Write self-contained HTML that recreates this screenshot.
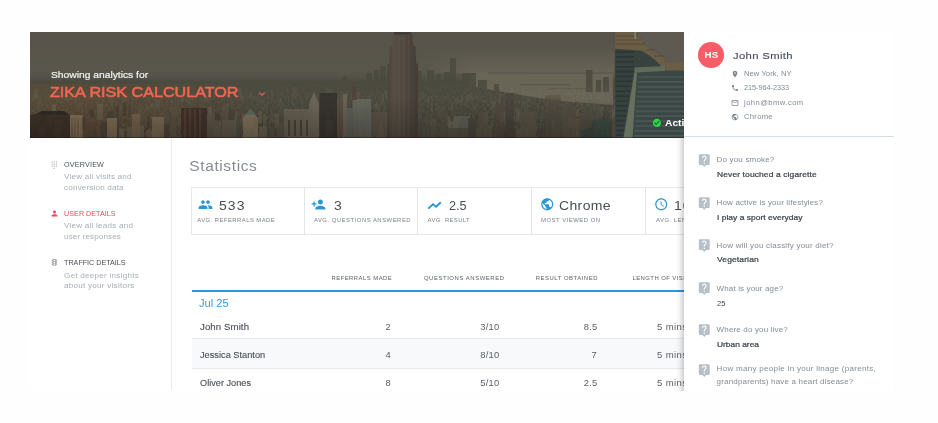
<!DOCTYPE html>
<html lang="en">
<head>
<meta charset="utf-8">
<title>Zika Risk Calculator – Analytics</title>
<style>
html,body{margin:0;padding:0;}
body{width:938px;height:423px;position:relative;overflow:hidden;background:#fefefe;font-family:"Liberation Sans",sans-serif;}
.t{position:absolute;white-space:nowrap;line-height:20px;height:20px;}
#main{will-change:transform;position:absolute;left:0;top:0;width:938px;height:390px;overflow:hidden;}
#hero{position:absolute;left:30px;top:32px;width:654px;height:106px;overflow:hidden;background:#6a6358;}
#hero svg{position:absolute;left:0;top:0;}
.vline{position:absolute;left:171.200px;top:138px;width:1px;height:252px;background:#e9ecee;}
.ic{position:absolute;}
#stats{position:absolute;left:190.500px;top:186.500px;width:600px;height:46.500px;border:1px solid #e3e8ec;box-sizing:content-box;}
#stats i{position:absolute;top:0;width:1px;height:47px;background:#e2e7eb;}
.blue{position:absolute;left:191.500px;top:290px;width:500px;height:1.500px;background:#2d95d9;}
.stripe{position:absolute;left:191.5px;top:338px;width:500px;height:29px;background:#f7f9fa;border-top:1px solid #e6eaed;border-bottom:1px solid #e6eaed;}
#panel{position:absolute;left:684px;top:31px;width:210px;height:360px;background:#fff;box-shadow:0 0 2px rgba(0,0,0,.03);}
#pshadow{position:absolute;left:676px;top:138px;width:8px;height:253px;background:linear-gradient(to right,rgba(0,0,0,0),rgba(0,0,0,.04) 40%,rgba(0,0,0,.18));}
#panelclip{will-change:transform;position:absolute;left:0;top:0;width:938px;height:391px;overflow:hidden;}
#ptext{position:absolute;left:0;top:0;width:938px;height:391px;overflow:hidden;}
.avatar{position:absolute;left:698.300px;top:42.200px;width:25.600px;height:25.600px;border-radius:50%;background:#f85c67;}
.pdiv{position:absolute;left:684px;top:135.6px;width:210px;height:1.2px;background:#d6dee4;}
</style>
</head>
<body>
<div id="main">
  <div style="position:absolute;left:30px;top:32px;width:700px;height:358px;background:#fff"></div>
  <div id="hero">
    <svg width="654" height="106" viewBox="30 32 654 106" preserveAspectRatio="none">
<defs>
<linearGradient id="sky" x1="0" y1="0" x2="0" y2="1">
<stop offset="0" stop-color="#57534a"/>
<stop offset=".36" stop-color="#59564c"/>
<stop offset=".41" stop-color="#56544a"/>
<stop offset=".47" stop-color="#4b4a3e"/>
<stop offset=".75" stop-color="#48463b"/>
<stop offset="1" stop-color="#423f36"/>
</linearGradient>
<linearGradient id="esb" x1="0" y1="0" x2="1" y2="0">
<stop offset="0" stop-color="#4a433b"/><stop offset=".2" stop-color="#564e44"/><stop offset=".55" stop-color="#514940"/><stop offset="1" stop-color="#443d36"/>
</linearGradient>
<linearGradient id="rb" x1="0" y1="0" x2="0" y2="1">
<stop offset="0" stop-color="#4a5350"/><stop offset="1" stop-color="#2f3a38"/>
</linearGradient>
<filter id="nz" x="0" y="0" width="100%" height="100%">
<feTurbulence type="fractalNoise" baseFrequency=".55 .3" numOctaves="2" seed="7" result="n"/>
<feColorMatrix type="matrix" values="0 0 0 0 .17  0 0 0 0 .17  0 0 0 0 .13  1.0 0 0 0 -.38"/>
</filter>
<filter id="nz2" x="0" y="0" width="100%" height="100%">
<feTurbulence type="fractalNoise" baseFrequency=".5 .25" numOctaves="2" seed="23" result="n"/>
<feColorMatrix type="matrix" values="0 0 0 0 .5  0 0 0 0 .49  0 0 0 0 .41  0 .8 0 0 -.34"/>
</filter>
<linearGradient id="fade" x1="0" y1="0" x2="0" y2="1">
<stop offset="0" stop-color="#fff" stop-opacity="0"/><stop offset=".45" stop-color="#fff" stop-opacity="0"/><stop offset=".62" stop-color="#fff" stop-opacity=".5"/><stop offset="1" stop-color="#fff" stop-opacity="1"/>
</linearGradient>
<mask id="cm"><rect x="30" y="32" width="654" height="106" fill="url(#fade)"/></mask>
</defs>
<rect x="30" y="32" width="654" height="106" fill="url(#sky)"/>
<!-- water band right -->
<path d="M470 73 L613 71.500 L613 105 L560 101 L520 95 L470 86z" fill="#6b6759" opacity=".9"/>
<path d="M520 84h50v1.200h-50zM548 88h40v1.200h-40z" fill="#59564b" opacity=".7"/>
<linearGradient id="hz" x1="0" y1="0" x2="0" y2="1"><stop offset="0" stop-color="#6b6759" stop-opacity="0"/><stop offset="1" stop-color="#6b6759" stop-opacity=".8"/></linearGradient>
<linearGradient id="hzx" x1="0" y1="0" x2="1" y2="0"><stop offset="0" stop-color="#fff" stop-opacity="0"/><stop offset=".3" stop-color="#fff" stop-opacity="1"/><stop offset="1" stop-color="#fff" stop-opacity="1"/></linearGradient>
<mask id="hzm"><rect x="416" y="46" width="198" height="28" fill="url(#hzx)"/></mask>
<rect x="416" y="46" width="198" height="27.500" fill="url(#hz)" mask="url(#hzm)"/>
<path d="M488 72.200h125v1.500H488z" fill="#55534a" opacity=".7"/>
<!-- distant skyline -->
<g fill="#4b4a3f" opacity=".85">
<rect x="366" y="73" width="6" height="14"/><rect x="374" y="70" width="5" height="16"/><rect x="380" y="66" width="6" height="22"/>
<rect x="416" y="71" width="6" height="16"/><rect x="427" y="70" width="7" height="18"/><rect x="437" y="74" width="4" height="12"/>
<rect x="444" y="72" width="7" height="16"/><rect x="450" y="58" width="6" height="30"/><rect x="462" y="73" width="8" height="18"/>
<rect x="465" y="73" width="11" height="24"/><rect x="478" y="80" width="9" height="18"/><rect x="494" y="84" width="5" height="14"/>
<rect x="586" y="70" width="6.500" height="22"/><rect x="596" y="80" width="5" height="12"/><rect x="603" y="77" width="6" height="15"/>
<rect x="305" y="82" width="8" height="16"/><rect x="342" y="76" width="5" height="14"/>
</g>
<!-- city texture -->
<g mask="url(#cm)">
<rect x="30" y="32" width="654" height="106" filter="url(#nz)"/>
<rect x="30" y="32" width="654" height="106" filter="url(#nz2)" opacity=".55"/>
</g>
<radialGradient id="warm" cx="60" cy="140" r="230" gradientUnits="userSpaceOnUse" gradientTransform="translate(0 84) scale(1 .4)"><stop offset="0" stop-color="#7a4e28" stop-opacity=".42"/><stop offset=".6" stop-color="#7a4e28" stop-opacity=".2"/><stop offset="1" stop-color="#7a4e28" stop-opacity="0"/></radialGradient>
<rect x="30" y="84" width="330" height="54" fill="url(#warm)"/>
<!-- proc -->
<g opacity=".38">
<rect x="30" y="99.8" width="3" height="9.9" fill="#4f4c41"/>
<rect x="34" y="89.2" width="4" height="9.8" fill="#646052"/>
<rect x="39" y="91.1" width="5" height="7.9" fill="#4f4c41"/>
<rect x="45" y="105.2" width="2" height="3.7" fill="#565649"/>
<rect x="50" y="94.6" width="2" height="7.8" fill="#4f4c41"/>
<rect x="55" y="90.6" width="5" height="7.9" fill="#625d4e"/>
<rect x="62" y="95.6" width="2" height="3.5" fill="#5d594a"/>
<rect x="66" y="92.0" width="2" height="9.2" fill="#646052"/>
<rect x="68" y="95.8" width="4" height="4.9" fill="#625d4e"/>
<rect x="75" y="93.8" width="2" height="6.7" fill="#646052"/>
<rect x="77" y="103.1" width="5" height="5.0" fill="#646052"/>
<rect x="83" y="104.7" width="2" height="3.6" fill="#4f4c41"/>
<rect x="85" y="105.2" width="3" height="6.1" fill="#565649"/>
<rect x="88" y="105.9" width="2" height="4.7" fill="#4f4c41"/>
<rect x="91" y="91.0" width="5" height="6.2" fill="#565649"/>
<rect x="96" y="92.2" width="5" height="5.2" fill="#4a483e"/>
<rect x="101" y="88.8" width="3" height="9.1" fill="#5d594a"/>
<rect x="107" y="100.4" width="2" height="3.1" fill="#4f4c41"/>
<rect x="109" y="95.7" width="5" height="7.5" fill="#5d594a"/>
<rect x="117" y="95.8" width="2" height="6.4" fill="#4f4c41"/>
<rect x="120" y="106.8" width="2" height="3.0" fill="#646052"/>
<rect x="123" y="97.6" width="2" height="4.7" fill="#646052"/>
<rect x="128" y="108.0" width="4" height="3.8" fill="#5d594a"/>
<rect x="133" y="102.7" width="3" height="3.1" fill="#4a483e"/>
<rect x="137" y="95.7" width="2" height="3.6" fill="#565649"/>
<rect x="139" y="94.1" width="2" height="7.8" fill="#4f4c41"/>
<rect x="141" y="98.3" width="4" height="6.9" fill="#4f4c41"/>
<rect x="145" y="106.3" width="5" height="4.2" fill="#646052"/>
<rect x="150" y="103.3" width="5" height="4.5" fill="#646052"/>
<rect x="155" y="99.5" width="5" height="10.6" fill="#646052"/>
<rect x="160" y="94.4" width="3" height="3.4" fill="#646052"/>
<rect x="164" y="93.3" width="2" height="8.9" fill="#4f4c41"/>
<rect x="168" y="93.5" width="3" height="5.3" fill="#565649"/>
<rect x="171" y="100.1" width="2" height="4.8" fill="#646052"/>
<rect x="175" y="105.4" width="2" height="5.2" fill="#5d594a"/>
<rect x="180" y="99.0" width="2" height="3.6" fill="#5d594a"/>
<rect x="182" y="97.5" width="2" height="4.4" fill="#646052"/>
<rect x="184" y="104.4" width="2" height="5.9" fill="#4a483e"/>
<rect x="189" y="96.8" width="5" height="8.5" fill="#5d594a"/>
<rect x="196" y="93.2" width="2" height="10.4" fill="#4a483e"/>
<rect x="201" y="85.6" width="3" height="10.7" fill="#565649"/>
<rect x="204" y="97.4" width="3" height="3.5" fill="#5d594a"/>
<rect x="207" y="95.3" width="2" height="6.6" fill="#625d4e"/>
<rect x="212" y="100.1" width="5" height="8.6" fill="#4a483e"/>
<rect x="218" y="101.9" width="2" height="8.5" fill="#4f4c41"/>
<rect x="220" y="98.4" width="3" height="7.6" fill="#4f4c41"/>
<rect x="224" y="94.1" width="4" height="3.1" fill="#625d4e"/>
<rect x="231" y="99.1" width="2" height="10.9" fill="#565649"/>
<rect x="234" y="96.6" width="3" height="10.5" fill="#4f4c41"/>
<rect x="238" y="87.6" width="3" height="9.7" fill="#646052"/>
<rect x="241" y="95.9" width="3" height="7.8" fill="#5d594a"/>
<rect x="247" y="98.9" width="2" height="7.0" fill="#4f4c41"/>
<rect x="250" y="92.3" width="2" height="5.9" fill="#646052"/>
<rect x="252" y="106.1" width="4" height="4.4" fill="#565649"/>
<rect x="257" y="91.1" width="3" height="10.1" fill="#565649"/>
<rect x="261" y="100.8" width="2" height="8.1" fill="#5d594a"/>
<rect x="263" y="106.0" width="3" height="4.8" fill="#5d594a"/>
<rect x="266" y="102.4" width="2" height="7.0" fill="#625d4e"/>
<rect x="271" y="89.8" width="2" height="10.6" fill="#5d594a"/>
<rect x="273" y="104.0" width="3" height="6.8" fill="#4f4c41"/>
<rect x="277" y="99.6" width="5" height="7.2" fill="#565649"/>
<rect x="284" y="103.7" width="3" height="5.6" fill="#4a483e"/>
<rect x="289" y="92.1" width="2" height="8.4" fill="#4a483e"/>
<rect x="292" y="87.0" width="5" height="9.3" fill="#5d594a"/>
<rect x="298" y="103.8" width="3" height="4.5" fill="#4a483e"/>
<rect x="301" y="102.4" width="2" height="9.4" fill="#625d4e"/>
<rect x="304" y="98.4" width="2" height="8.0" fill="#4a483e"/>
<rect x="306" y="104.6" width="5" height="4.6" fill="#4a483e"/>
<rect x="311" y="100.5" width="5" height="3.1" fill="#565649"/>
<rect x="316" y="103.6" width="2" height="4.8" fill="#646052"/>
<rect x="321" y="104.9" width="4" height="7.0" fill="#5d594a"/>
<rect x="326" y="87.1" width="5" height="10.2" fill="#565649"/>
<rect x="332" y="92.5" width="2" height="6.6" fill="#625d4e"/>
<rect x="335" y="102.5" width="4" height="7.6" fill="#4a483e"/>
<rect x="340" y="91.1" width="3" height="8.2" fill="#565649"/>
<rect x="346" y="95.9" width="5" height="4.0" fill="#4f4c41"/>
<rect x="351" y="101.4" width="3" height="7.3" fill="#4a483e"/>
<rect x="355" y="91.7" width="5" height="9.8" fill="#625d4e"/>
<rect x="360" y="97.0" width="3" height="5.7" fill="#4a483e"/>
<rect x="364" y="105.1" width="2" height="4.7" fill="#4f4c41"/>
<rect x="366" y="99.7" width="2" height="7.3" fill="#5d594a"/>
<rect x="369" y="99.4" width="2" height="11.0" fill="#646052"/>
<rect x="374" y="103.6" width="5" height="6.5" fill="#646052"/>
<rect x="382" y="94.0" width="2" height="9.1" fill="#646052"/>
<rect x="385" y="91.1" width="5" height="7.5" fill="#646052"/>
<rect x="418" y="98.4" width="3" height="5.2" fill="#5d594a"/>
<rect x="422" y="100.8" width="3" height="10.2" fill="#4f4c41"/>
<rect x="427" y="98.8" width="3" height="3.9" fill="#625d4e"/>
<rect x="431" y="103.0" width="2" height="8.6" fill="#625d4e"/>
<rect x="433" y="102.2" width="2" height="4.8" fill="#4a483e"/>
<rect x="438" y="99.0" width="3" height="5.0" fill="#4f4c41"/>
<rect x="444" y="100.2" width="4" height="4.0" fill="#4a483e"/>
<rect x="451" y="101.4" width="2" height="8.6" fill="#625d4e"/>
<rect x="454" y="98.2" width="5" height="6.3" fill="#5d594a"/>
<rect x="461" y="94.6" width="2" height="9.9" fill="#5d594a"/>
<rect x="465" y="96.0" width="2" height="9.8" fill="#5d594a"/>
<rect x="467" y="93.5" width="5" height="8.0" fill="#5d594a"/>
<rect x="473" y="105.2" width="4" height="5.5" fill="#5d594a"/>
<rect x="477" y="95.8" width="2" height="4.1" fill="#565649"/>
<rect x="479" y="96.9" width="3" height="6.1" fill="#4f4c41"/>
<rect x="484" y="98.4" width="5" height="4.0" fill="#565649"/>
<rect x="489" y="102.3" width="2" height="4.6" fill="#4a483e"/>
<rect x="491" y="101.1" width="5" height="7.0" fill="#646052"/>
<rect x="499" y="94.3" width="2" height="9.4" fill="#625d4e"/>
<rect x="501" y="102.6" width="4" height="7.9" fill="#4f4c41"/>
<rect x="505" y="94.8" width="2" height="4.5" fill="#5d594a"/>
<rect x="508" y="93.2" width="5" height="3.8" fill="#565649"/>
<rect x="514" y="92.1" width="2" height="9.1" fill="#4f4c41"/>
<rect x="517" y="93.5" width="4" height="5.8" fill="#4a483e"/>
<rect x="521" y="100.9" width="5" height="8.6" fill="#5d594a"/>
<rect x="527" y="96.0" width="3" height="5.9" fill="#5d594a"/>
<rect x="532" y="104.9" width="2" height="3.8" fill="#4a483e"/>
<rect x="534" y="100.5" width="5" height="10.0" fill="#4f4c41"/>
<rect x="541" y="100.8" width="4" height="4.5" fill="#4a483e"/>
<rect x="546" y="97.6" width="3" height="10.3" fill="#5d594a"/>
<rect x="550" y="99.9" width="2" height="10.2" fill="#565649"/>
<rect x="553" y="101.1" width="3" height="9.1" fill="#625d4e"/>
<rect x="557" y="99.4" width="3" height="6.8" fill="#565649"/>
<rect x="562" y="106.3" width="2" height="4.9" fill="#565649"/>
<rect x="565" y="99.4" width="3" height="4.7" fill="#625d4e"/>
<rect x="569" y="103.1" width="4" height="11.0" fill="#4f4c41"/>
<rect x="575" y="101.1" width="2" height="3.9" fill="#4f4c41"/>
<rect x="578" y="102.3" width="4" height="3.4" fill="#625d4e"/>
<rect x="583" y="103.9" width="3" height="5.2" fill="#4f4c41"/>
<rect x="588" y="104.0" width="4" height="9.8" fill="#565649"/>
<rect x="592" y="102.1" width="4" height="7.8" fill="#5d594a"/>
<rect x="597" y="105.8" width="3" height="10.8" fill="#646052"/>
<rect x="600" y="106.1" width="3" height="10.6" fill="#646052"/>
<rect x="604" y="105.0" width="3" height="7.2" fill="#4a483e"/>
<rect x="610" y="108.8" width="5" height="9.0" fill="#646052"/>
</g>
<g opacity=".6">
<rect x="30" y="118.7" width="7" height="7.9" fill="#4f554b"/>
<rect x="37" y="101.7" width="4" height="15.0" fill="#5f5646"/>
<rect x="41" y="111.5" width="4" height="11.2" fill="#474238"/>
<rect x="45" y="120.2" width="6" height="7.2" fill="#625a49"/>
<rect x="52" y="104.4" width="4" height="13.2" fill="#6d6755"/>
<rect x="58" y="120.6" width="5" height="7.4" fill="#5f5646"/>
<rect x="66" y="114.7" width="4" height="7.5" fill="#4f554b"/>
<rect x="72" y="115.0" width="6" height="9.1" fill="#4f554b"/>
<rect x="79" y="117.6" width="7" height="12.4" fill="#403d34"/>
<rect x="90" y="108.7" width="4" height="8.9" fill="#403d34"/>
<rect x="97" y="103.7" width="6" height="16.2" fill="#6d6755"/>
<rect x="107" y="111.5" width="7" height="12.8" fill="#403d34"/>
<rect x="115" y="105.6" width="4" height="17.4" fill="#474238"/>
<rect x="123" y="102.6" width="3" height="13.5" fill="#403d34"/>
<rect x="128" y="104.0" width="3" height="13.5" fill="#4a4237"/>
<rect x="132" y="113.7" width="3" height="15.1" fill="#585245"/>
<rect x="138" y="107.7" width="4" height="13.6" fill="#625a49"/>
<rect x="143" y="112.9" width="4" height="10.1" fill="#585245"/>
<rect x="147" y="116.1" width="3" height="11.4" fill="#474238"/>
<rect x="152" y="106.5" width="5" height="15.0" fill="#585245"/>
<rect x="158" y="116.0" width="4" height="13.8" fill="#5f5646"/>
<rect x="163" y="112.5" width="6" height="15.1" fill="#585245"/>
<rect x="171" y="106.9" width="7" height="10.4" fill="#5f5646"/>
<rect x="178" y="116.9" width="6" height="7.0" fill="#625a49"/>
<rect x="188" y="117.3" width="5" height="9.6" fill="#6c6452"/>
<rect x="194" y="107.5" width="4" height="16.9" fill="#403d34"/>
<rect x="200" y="105.4" width="7" height="15.2" fill="#585245"/>
<rect x="208" y="106.7" width="4" height="13.9" fill="#6c6452"/>
<rect x="213" y="113.0" width="7" height="11.3" fill="#403d34"/>
<rect x="222" y="104.6" width="6" height="15.6" fill="#5f5646"/>
<rect x="229" y="108.6" width="5" height="17.6" fill="#4a4237"/>
<rect x="235" y="110.8" width="3" height="10.3" fill="#5f5646"/>
<rect x="242" y="114.1" width="5" height="13.0" fill="#6d6755"/>
<rect x="248" y="115.2" width="5" height="12.5" fill="#6d6755"/>
<rect x="254" y="115.3" width="4" height="7.1" fill="#403d34"/>
<rect x="258" y="111.4" width="4" height="12.2" fill="#6d6755"/>
<rect x="263" y="113.4" width="3" height="13.8" fill="#6c6452"/>
<rect x="269" y="114.0" width="6" height="9.7" fill="#5f5646"/>
<rect x="275" y="113.7" width="4" height="14.8" fill="#6c6452"/>
<rect x="279" y="103.5" width="7" height="13.8" fill="#4f554b"/>
<rect x="287" y="118.1" width="7" height="8.6" fill="#4a4237"/>
<rect x="295" y="110.0" width="5" height="10.7" fill="#5f5646"/>
<rect x="304" y="111.6" width="4" height="11.9" fill="#6c6452"/>
<rect x="312" y="104.8" width="6" height="17.0" fill="#5f5646"/>
<rect x="318" y="112.4" width="5" height="16.0" fill="#4a4237"/>
<rect x="327" y="113.7" width="3" height="12.3" fill="#6c6452"/>
<rect x="332" y="102.5" width="5" height="17.0" fill="#585245"/>
<rect x="341" y="106.3" width="5" height="14.2" fill="#4f554b"/>
<rect x="348" y="120.1" width="6" height="9.5" fill="#686150"/>
<rect x="356" y="105.5" width="4" height="14.8" fill="#585245"/>
<rect x="361" y="101.2" width="3" height="15.0" fill="#625a49"/>
<rect x="364" y="111.3" width="4" height="7.3" fill="#474238"/>
<rect x="371" y="109.4" width="4" height="13.2" fill="#4a4237"/>
<rect x="376" y="111.7" width="5" height="8.2" fill="#585245"/>
<rect x="382" y="114.9" width="7" height="12.6" fill="#625a49"/>
<rect x="418" y="108.1" width="4" height="11.4" fill="#4f554b"/>
<rect x="425" y="115.8" width="4" height="11.0" fill="#585245"/>
<rect x="430" y="118.8" width="6" height="7.6" fill="#6d6755"/>
<rect x="437" y="105.7" width="6" height="12.4" fill="#585245"/>
<rect x="443" y="112.0" width="4" height="15.9" fill="#585245"/>
<rect x="447" y="116.8" width="4" height="9.2" fill="#6c6452"/>
<rect x="453" y="117.8" width="7" height="11.6" fill="#6d6755"/>
<rect x="463" y="117.4" width="6" height="9.6" fill="#4f554b"/>
<rect x="470" y="120.5" width="7" height="7.1" fill="#474238"/>
<rect x="477" y="112.0" width="6" height="11.0" fill="#403d34"/>
<rect x="484" y="112.9" width="4" height="10.9" fill="#625a49"/>
<rect x="492" y="110.2" width="7" height="6.8" fill="#585245"/>
<rect x="499" y="111.7" width="7" height="10.7" fill="#6c6452"/>
<rect x="510" y="115.1" width="5" height="6.1" fill="#625a49"/>
<rect x="516" y="109.6" width="4" height="12.8" fill="#686150"/>
<rect x="524" y="101.3" width="4" height="16.8" fill="#4f554b"/>
<rect x="531" y="111.1" width="7" height="9.6" fill="#4f554b"/>
<rect x="541" y="111.6" width="7" height="7.0" fill="#4f554b"/>
<rect x="552" y="119.3" width="3" height="10.0" fill="#6d6755"/>
<rect x="557" y="108.6" width="7" height="13.7" fill="#4f554b"/>
<rect x="564" y="109.6" width="3" height="7.7" fill="#585245"/>
<rect x="568" y="116.9" width="4" height="10.8" fill="#6d6755"/>
<rect x="576" y="109.2" width="3" height="7.2" fill="#6c6452"/>
<rect x="581" y="105.5" width="5" height="15.3" fill="#4f554b"/>
<rect x="589" y="113.0" width="4" height="13.8" fill="#4f554b"/>
<rect x="595" y="107.7" width="4" height="17.1" fill="#4f554b"/>
<rect x="602" y="117.2" width="7" height="9.8" fill="#474238"/>
</g>
<g opacity=".8">
<rect x="30" y="124.6" width="8" height="13.4" fill="#403d34"/>
<rect x="40" y="127.2" width="5" height="10.8" fill="#625a49"/>
<rect x="45" y="126.7" width="8" height="11.3" fill="#4a4237"/>
<rect x="55" y="120.4" width="6" height="17.6" fill="#6d6755"/>
<rect x="68" y="128.4" width="5" height="9.6" fill="#4a4237"/>
<rect x="75" y="128.7" width="8" height="9.3" fill="#6d6755"/>
<rect x="88" y="130.0" width="8" height="8.0" fill="#474238"/>
<rect x="101" y="122.1" width="9" height="15.9" fill="#474238"/>
<rect x="115" y="123.2" width="4" height="14.8" fill="#474238"/>
<rect x="119" y="128.6" width="5" height="9.4" fill="#6d6755"/>
<rect x="127" y="127.3" width="9" height="10.7" fill="#6c6452"/>
<rect x="138" y="125.5" width="6" height="12.5" fill="#6c6452"/>
<rect x="147" y="130.1" width="9" height="7.9" fill="#6d6755"/>
<rect x="161" y="124.1" width="8" height="13.9" fill="#4a4237"/>
<rect x="171" y="119.3" width="5" height="18.7" fill="#5f5646"/>
<rect x="181" y="130.3" width="5" height="7.7" fill="#686150"/>
<rect x="188" y="119.4" width="9" height="18.6" fill="#474238"/>
<rect x="202" y="120.4" width="6" height="17.6" fill="#585245"/>
<rect x="213" y="120.6" width="8" height="17.4" fill="#625a49"/>
<rect x="221" y="129.5" width="7" height="8.5" fill="#585245"/>
<rect x="230" y="120.1" width="9" height="17.9" fill="#4f554b"/>
<rect x="244" y="123.0" width="8" height="15.0" fill="#686150"/>
<rect x="253" y="126.2" width="5" height="11.8" fill="#686150"/>
<rect x="259" y="126.6" width="8" height="11.4" fill="#6d6755"/>
<rect x="270" y="127.3" width="5" height="10.7" fill="#585245"/>
<rect x="277" y="124.0" width="5" height="14.0" fill="#5f5646"/>
<rect x="282" y="121.0" width="9" height="17.0" fill="#585245"/>
<rect x="294" y="123.6" width="7" height="14.4" fill="#625a49"/>
<rect x="303" y="119.4" width="7" height="18.6" fill="#6d6755"/>
<rect x="313" y="125.2" width="6" height="12.8" fill="#625a49"/>
<rect x="326" y="120.4" width="7" height="17.6" fill="#6c6452"/>
<rect x="338" y="119.3" width="4" height="18.7" fill="#4a4237"/>
<rect x="344" y="124.7" width="8" height="13.3" fill="#4f554b"/>
<rect x="352" y="119.3" width="6" height="18.7" fill="#403d34"/>
<rect x="365" y="119.4" width="8" height="18.6" fill="#4f554b"/>
<rect x="378" y="121.5" width="6" height="16.5" fill="#403d34"/>
<rect x="422" y="127.7" width="8" height="10.3" fill="#4f554b"/>
<rect x="431" y="118.0" width="4" height="20.0" fill="#5f5646"/>
<rect x="440" y="124.1" width="7" height="13.9" fill="#585245"/>
<rect x="448" y="121.5" width="9" height="16.5" fill="#6d6755"/>
<rect x="457" y="130.6" width="4" height="7.4" fill="#585245"/>
<rect x="461" y="123.9" width="8" height="14.1" fill="#625a49"/>
<rect x="469" y="128.6" width="6" height="9.4" fill="#403d34"/>
<rect x="475" y="129.6" width="6" height="8.4" fill="#625a49"/>
<rect x="484" y="126.4" width="8" height="11.6" fill="#5f5646"/>
<rect x="499" y="128.8" width="8" height="9.2" fill="#403d34"/>
<rect x="507" y="119.4" width="7" height="18.6" fill="#403d34"/>
<rect x="516" y="130.0" width="7" height="8.0" fill="#625a49"/>
<rect x="524" y="127.9" width="5" height="10.1" fill="#686150"/>
<rect x="530" y="120.3" width="6" height="17.7" fill="#5f5646"/>
<rect x="539" y="129.6" width="4" height="8.4" fill="#4a4237"/>
<rect x="544" y="123.1" width="8" height="14.9" fill="#474238"/>
<rect x="552" y="130.5" width="9" height="7.5" fill="#5f5646"/>
<rect x="563" y="122.0" width="7" height="16.0" fill="#585245"/>
<rect x="572" y="118.6" width="9" height="19.4" fill="#625a49"/>
<rect x="584" y="129.6" width="4" height="8.4" fill="#403d34"/>
<rect x="588" y="122.3" width="9" height="15.7" fill="#403d34"/>
<rect x="598" y="128.7" width="9" height="9.3" fill="#403d34"/>
<rect x="609" y="120.7" width="6" height="17.3" fill="#4a4237"/>
</g>
<!-- /proc -->
<g opacity=".8">
<!-- left foreground -->
<path d="M30 115l6-1 6-3h22l6 4.500V138H30z" fill="#372b24"/>
<path d="M36 114l6-3h22l5 4z" fill="#26221f"/>
<rect x="70" y="115" width="12.500" height="23" fill="#937b5d"/><path d="M72 118v20M75 118v20M78 118v20" stroke="#6b5540" stroke-width=".8"/>
<rect x="84" y="122" width="10" height="16" fill="#5d4a3a"/>
<rect x="107" y="118" width="10" height="20" fill="#8e7a5f"/>
<rect x="132" y="114" width="8" height="24" fill="#7a6a55"/>
<rect x="152" y="117" width="12" height="21" fill="#85745c"/>
<rect x="181" y="108" width="26" height="30" fill="#3a2c26"/>
<path d="M185 109v29M190 109v29M195 109v29M200 109v29" stroke="#6e4432" stroke-width="1.200"/>
<rect x="207" y="114" width="8" height="24" fill="#5e564a"/>
<rect x="222" y="120" width="14" height="18" fill="#665e50"/>
<path d="M243 118l7.500-9 7.500 9v20h-15z" fill="#8c7c62"/><path d="M246 114.500l4.500-5.500 4.500 5.500z" fill="#4f7a6e"/>


<!-- mid -->
<rect x="284" y="109" width="27" height="29" fill="#6d6658"/>
<path d="M289 120v16M295 120v16M301 120v16M307 120v16" stroke="#3b352f" stroke-width="1.600"/>
<path d="M309 104l5-12 5 12v34h-10z" fill="#736c5f"/>
<rect x="319.500" y="93" width="17.500" height="45" fill="#312f2b"/>
<rect x="337" y="98" width="6" height="40" fill="#5c4f43"/>
<rect x="343" y="94" width="4" height="44" fill="#70685b"/>
<rect x="352.500" y="99" width="18.500" height="39" fill="#696c62"/>
<rect x="347" y="108" width="6" height="30" fill="#5f655f"/>
<rect x="352" y="86" width="4.500" height="14" fill="#524238"/>
<rect x="371" y="112" width="16" height="26" fill="#5c554a"/>
<path d="M376 138l5-18 5 18z" fill="#705e4c"/>
</g>
<!-- Empire State -->
<path d="M395 32h16.500l1 4 .8 10h2.200l.7 17.500h1.800V138h-30.500V63.500h1.800l.7-17.500h2.200l.8-10z" fill="url(#esb)"/>
<rect x="398" y="36" width="2" height="102" fill="#5a5347" opacity=".5"/><rect x="403" y="36" width="2" height="102" fill="#5a5347" opacity=".5"/><rect x="408" y="36" width="1.500" height="102" fill="#5a5347" opacity=".4"/><rect x="394" y="32" width="15.500" height="2.500" fill="#37332d" opacity=".7"/>
<g opacity=".7">
<!-- right of ESB -->
<rect x="418" y="118" width="30" height="20" fill="#554f45" opacity=".6"/>
<rect x="454" y="116" width="16" height="12" fill="#686860"/>
<rect x="446" y="128" width="36" height="10" fill="#534f45"/>
<rect x="468" y="118" width="8" height="20" fill="#4a4740"/>
<rect x="495" y="104" width="9" height="34" fill="#524a40"/>
<rect x="505" y="93" width="9" height="45" fill="#49443c"/>
<rect x="478" y="112" width="10" height="26" fill="#5c5347"/>
<rect x="520" y="112" width="14" height="26" fill="#5c5448"/>
<rect x="545" y="95.500" width="16" height="42.500" fill="#524c42"/>
<rect x="545" y="95.500" width="16" height="3" fill="#5c5447"/>
<rect x="562" y="106" width="14" height="32" fill="#575045"/>
<rect x="578" y="112" width="14" height="26" fill="#544e44"/>
<path d="M593 121l17-2v19h-17z" fill="#354f4b"/>
<path d="M580 130l14-3v11h-14z" fill="#374845"/>
</g>
<!-- right tower -->
<path d="M615 32H684V138H615z" fill="#37423f"/>
<path d="M635.500 32H684v30.500h-18.700v-3.900l-10.300-6.600-9.200-6.400z" fill="#5e5a51"/>
<path d="M615 32h20.500l10.300 13.600 9.200 6.400 10.300 6.600v3.900H684V69l-18.700 1-11.700-11.400-11.600-7.800-27-2z" fill="#6c5d46"/>
<g stroke="#3f3626" stroke-width=".8" opacity=".6"><path d="M615 36h23M615 40h26M615 44h30M646 50h8M654 56h10M666 66h18"/></g>
<rect x="634.300" y="32" width="1.600" height="7" fill="#8a826f"/>
<path d="M634.500 70l30.500-2.500L684 67v71h-60.500z" fill="#3b4745"/>
<path d="M634.500 67.500l30.500-1.500v5l-30.500 1.500z" fill="#606b5c"/><path d="M665.400 62.800l18.600-.8v8.400h-18.600z" fill="#6c5d46"/>
<path d="M634.500 72l2.500 .5-4.500 65.500h-9z" fill="#66705f"/>
<g stroke="#55635f" stroke-width="1.700" opacity=".6">
<path d="M638.2 77.0H684M637.8 81.9H684M637.5 86.8H684M637.2 91.7H684M636.8 96.6H684M636.5 101.5H684M636.2 106.4H684M635.8 111.3H684M635.5 116.2H684M635.2 121.1H684M634.8 126.0H684M634.5 130.9H684M634.1 135.8H684"/>
</g>
<g stroke="#232d2e" stroke-width="1.600" opacity=".6">
<path d="M616 52.0H634.0M616 56.9H634.0M616 61.8H634.0M616 66.7H634.0M616 71.6H634.0M616 76.5H632.8M616 81.4H631.9M616 86.3H631.1M616 91.2H630.3M616 96.1H629.5M616 101.0H628.7M616 105.9H627.9M616 110.8H627.0M616 115.7H626.2M616 120.6H625.4M616 125.5H624.6M616 130.4H623.8M616 135.3H623.0"/>
</g>
<linearGradient id="bot" x1="0" y1="0" x2="0" y2="1"><stop offset="0" stop-color="#1e1914" stop-opacity="0"/><stop offset=".62" stop-color="#1e1914" stop-opacity="0"/><stop offset="1" stop-color="#1e1914" stop-opacity=".38"/></linearGradient>
<rect x="30" y="32" width="582" height="106" fill="url(#bot)"/>
<rect x="30" y="137" width="654" height="1" fill="#0d0b09" opacity=".4"/>
<!-- overall dark overlay -->

</svg>

  </div>
  <div class="vline"></div>
  <!-- chevron -->
  <svg class="ic" style="left:256px;top:88px" width="12" height="12" viewBox="0 0 24 24"><path fill="#f26552" d="M16.59 8.59L12 13.17 7.41 8.59 6 10l6 6 6-6z"/></svg>
  <!-- active check -->
  <svg class="ic" style="left:652.2px;top:117.8px" width="9.8" height="9.8" viewBox="0 0 24 24"><circle cx="12" cy="12" r="9" fill="#1f4a29"/><path fill="#2fd34b" d="M12 2C6.48 2 2 6.48 2 12s4.48 10 10 10 10-4.48 10-10S17.52 2 12 2zm-2 15l-5-5 1.41-1.41L10 14.17l7.59-7.59L19 8l-9 9z"/></svg>
  <!-- sidebar icons -->
  <svg class="ic" style="left:49.7px;top:160.5px" width="8.5" height="8.5" viewBox="0 0 24 24"><path fill="#b4bcc4" d="M12 19c-1.1 0-2 .9-2 2s.9 2 2 2 2-.9 2-2-.9-2-2-2zM6 1c-1.1 0-2 .9-2 2s.9 2 2 2 2-.9 2-2-.9-2-2-2zm0 6c-1.1 0-2 .9-2 2s.9 2 2 2 2-.9 2-2-.9-2-2-2zm0 6c-1.1 0-2 .9-2 2s.9 2 2 2 2-.9 2-2-.9-2-2-2zm12-8c1.100 0 2-.9 2-2s-.9-2-2-2-2 .9-2 2 .9 2 2 2zm-6 8c-1.1 0-2 .9-2 2s.9 2 2 2 2-.9 2-2-.9-2-2-2zm6 0c-1.1 0-2 .9-2 2s.9 2 2 2 2-.9 2-2-.9-2-2-2zm0-6c-1.1 0-2 .9-2 2s.9 2 2 2 2-.9 2-2-.9-2-2-2zm-6 0c-1.1 0-2 .9-2 2s.9 2 2 2 2-.9 2-2-.9-2-2-2zm0-6c-1.1 0-2 .9-2 2s.9 2 2 2 2-.9 2-2-.9-2-2-2z"/></svg>
  <svg class="ic" style="left:49.5px;top:208.8px" width="9" height="9" viewBox="0 0 24 24"><path fill="#f0475a" d="M12 12c2.21 0 4-1.79 4-4s-1.790-4-4-4-4 1.790-4 4 1.790 4 4 4zm0 2c-2.670 0-8 1.340-8 4v2h16v-2c0-2.660-5.330-4-8-4z"/></svg>
  <svg class="ic" style="left:49.900px;top:258.200px" width="8.800" height="8.800" viewBox="0 0 24 24"><path fill="#a4adb6" d="M20 10h-3V8.860c1.720-.45 3-2 3-3.860h-3V4c0-.55-.45-1-1-1H8c-.55 0-1 .45-1 1v1H4c0 1.860 1.280 3.410 3 3.860V10H4c0 1.860 1.280 3.410 3 3.860V15H4c0 1.860 1.280 3.410 3 3.860V20c0 .55.45 1 1 1h8c.55 0 1-.45 1-1v-1.140c1.720-.45 3-2 3-3.860h-3v-1.140c1.720-.45 3-2 3-3.860zm-8 9c-1.110 0-2-.9-2-2s.89-2 2-2c1.100 0 2 .9 2 2s-.89 2-2 2zm0-5c-1.110 0-2-.9-2-2s.89-2 2-2c1.100 0 2 .9 2 2s-.89 2-2 2zm0-5c-1.110 0-2-.9-2-2 0-1.110.89-2 2-2 1.100 0 2 .9 2 2 0 1.110-.89 2-2 2z"/></svg>
  <!-- stats -->
  <div id="stats"><i style="left:112.500px"></i><i style="left:225.500px"></i><i style="left:339.200px"></i><i style="left:453px"></i></div>
  <svg class="ic" style="left:197.6px;top:197.100px" width="15" height="15" viewBox="0 0 24 24"><path fill="#2b95d6" d="M16 11c1.660 0 2.990-1.340 2.990-3S17.660 5 16 5c-1.660 0-3 1.340-3 3s1.340 3 3 3zm-8 0c1.660 0 2.990-1.340 2.990-3S9.660 5 8 5C6.340 5 5 6.340 5 8s1.340 3 3 3zm0 2c-2.330 0-7 1.170-7 3.500V19h14v-2.500c0-2.330-4.670-3.500-7-3.500zm8 0c-.29 0-.62.020-.97.050 1.160.840 1.970 1.970 1.970 3.450V19h6v-2.500c0-2.330-4.670-3.500-7-3.500z"/></svg>
  <svg class="ic" style="left:311.400px;top:197.100px" width="15" height="15" viewBox="0 0 24 24"><path fill="#2b95d6" d="M15 12c2.210 0 4-1.790 4-4s-1.790-4-4-4-4 1.790-4 4 1.790 4 4 4zm-9-2V7H4v3H1v2h3v3h2v-3h3v-2H6zm9 4c-2.670 0-8 1.340-8 4v2h16v-2c0-2.660-5.330-4-8-4z"/></svg>
  <svg class="ic" style="left:426px;top:200px" width="17" height="11" viewBox="426 200 17 11"><path fill="none" stroke="#2b95d6" stroke-width="1.900" stroke-linejoin="miter" d="M428.200 208.600l4.800-4.300 3.100 2.500 4.700-4.500"/></svg>
  <svg class="ic" style="left:539.800px;top:197.400px" width="14.500" height="14.500" viewBox="0 0 24 24"><path fill="#2b95d6" d="M12 2C6.480 2 2 6.480 2 12s4.480 10 10 10 10-4.480 10-10S17.520 2 12 2zm-1 17.930c-3.950-.49-7-3.850-7-7.930 0-.62.080-1.210.21-1.790L9 15v1c0 1.100.9 2 2 2v1.930zm6.900-2.540c-.26-.81-1-1.390-1.900-1.390h-1v-3c0-.55-.45-1-1-1H8v-2h2c.55 0 1-.45 1-1V7h2c1.100 0 2-.9 2-2v-.41c2.930 1.190 5 4.060 5 7.410 0 2.080-.8 3.970-2.100 5.390z"/></svg>
  <svg class="ic" style="left:654.400px;top:197.400px" width="14.500" height="14.500" viewBox="0 0 24 24"><path fill="#2b95d6" d="M11.990 2C6.470 2 2 6.480 2 12s4.470 10 9.990 10C17.520 22 22 17.520 22 12S17.520 2 11.990 2zM12 20c-4.420 0-8-3.580-8-8s3.580-8 8-8 8 3.580 8 8-3.580 8-8 8zm.5-13H11v6l5.250 3.150.75-1.230-4.500-2.670z"/></svg>
  <!-- table -->
  <div class="stripe"></div>
  <div class="blue"></div>
<span class="t" id="t0" style="top:65.00px;font-size:9.5px;color:rgba(255,255,255,.9);left:50.60px;letter-spacing:0.006px;-webkit-text-stroke:.2px rgba(255,255,255,.9);transform:scaleX(1.08);transform-origin:left center;">Showing analytics for</span>
<span class="t" id="t1" style="top:82.30px;font-size:15px;color:#f26552;left:49.80px;letter-spacing:0.000px;-webkit-text-stroke:.6px #f26552;transform:scaleX(1.0751);transform-origin:left center;">ZIKA RISK CALCULATOR</span>
<span class="t" id="t2" style="top:113.00px;font-size:9.5px;color:#fff;font-weight:700;left:665.40px;transform:scaleX(1.08);transform-origin:left center;">Active</span>
<span class="t" id="t3" style="top:154.60px;font-size:7.2px;color:#4a4f57;left:64.10px;letter-spacing:0.170px;">OVERVIEW</span>
<span class="t" id="t4" style="top:167.00px;font-size:8.1px;color:#a7aeb6;left:64.10px;letter-spacing:0.204px;">View all visits and</span>
<span class="t" id="t5" style="top:177.50px;font-size:8.1px;color:#a7aeb6;left:64.10px;letter-spacing:0.167px;">conversion data</span>
<span class="t" id="t6" style="top:203.50px;font-size:7.2px;color:#f0475a;left:64.10px;letter-spacing:0.010px;">USER DETAILS</span>
<span class="t" id="t7" style="top:216.40px;font-size:8.1px;color:#a7aeb6;left:64.10px;letter-spacing:0.224px;">View all leads and</span>
<span class="t" id="t8" style="top:227.00px;font-size:8.1px;color:#a7aeb6;left:64.10px;letter-spacing:0.112px;">user responses</span>
<span class="t" id="t9" style="top:252.70px;font-size:7.2px;color:#4a4f57;left:64.10px;letter-spacing:-0.026px;">TRAFFIC DETAILS</span>
<span class="t" id="t10" style="top:265.60px;font-size:8.1px;color:#a7aeb6;left:64.10px;letter-spacing:0.244px;">Get deeper insights</span>
<span class="t" id="t11" style="top:276.00px;font-size:8.1px;color:#a7aeb6;left:64.10px;letter-spacing:0.245px;">about your visitors</span>
<span class="t" id="t12" style="top:156.00px;font-size:15.5px;color:#878d93;left:189.30px;letter-spacing:0.609px;">Statistics</span>
<span class="t" id="t13" style="top:196.00px;font-size:12.5px;color:#4a4f57;left:218.80px;letter-spacing:0.954px;transform:scaleX(1.12);transform-origin:left center;">533</span>
<span class="t" id="t14" style="top:210.20px;font-size:5.9px;color:#7a8087;left:197.20px;letter-spacing:0.461px;">AVG. REFERRALS MADE</span>
<span class="t" id="t15" style="top:196.00px;font-size:12.5px;color:#4a4f57;left:334.00px;letter-spacing:0.000px;transform:scaleX(1.12);transform-origin:left center;">3</span>
<span class="t" id="t16" style="top:210.20px;font-size:5.9px;color:#7a8087;left:313.90px;letter-spacing:0.517px;">AVG. QUESTIONS ANSWERED</span>
<span class="t" id="t17" style="top:196.00px;font-size:12.5px;color:#4a4f57;left:449.00px;letter-spacing:0.000px;transform:scaleX(1.012);transform-origin:left center;">2.5</span>
<span class="t" id="t18" style="top:210.20px;font-size:5.9px;color:#7a8087;left:427.60px;letter-spacing:0.402px;">AVG. RESULT</span>
<span class="t" id="t19" style="top:196.00px;font-size:12.5px;color:#4a4f57;left:559.40px;letter-spacing:0.321px;transform:scaleX(1.12);transform-origin:left center;">Chrome</span>
<span class="t" id="t20" style="top:210.20px;font-size:5.9px;color:#7a8087;left:541.00px;letter-spacing:0.518px;">MOST VIEWED ON</span>
<span class="t" id="t21" style="top:196.00px;font-size:12.5px;color:#4a4f57;left:674.40px;letter-spacing:.9px;transform:scaleX(1.12);transform-origin:left center;">10</span>
<span class="t" id="t22" style="top:210.20px;font-size:5.9px;color:#7a8087;left:656.00px;letter-spacing:.5px;">AVG. LENGTH</span>
<span class="t" id="t23" style="top:267.90px;font-size:5.9px;color:#5a6068;left:331.50px;letter-spacing:0.476px;">REFERRALS MADE</span>
<span class="t" id="t24" style="top:267.90px;font-size:5.9px;color:#5a6068;left:423.90px;letter-spacing:0.591px;">QUESTIONS ANSWERED</span>
<span class="t" id="t25" style="top:267.90px;font-size:5.9px;color:#5a6068;left:535.80px;letter-spacing:0.542px;">RESULT OBTAINED</span>
<span class="t" id="t26" style="top:267.90px;font-size:5.9px;color:#5a6068;left:632.50px;letter-spacing:.45px;">LENGTH OF VISIT</span>
<span class="t" id="t27" style="top:292.80px;font-size:10.5px;color:#3a9ad9;left:198.90px;letter-spacing:0.000px;transform:scaleX(1.0595);transform-origin:left center;">Jul 25</span>
<span class="t" id="t28" style="top:316.80px;font-size:8.5px;color:#4a4f57;left:199.50px;letter-spacing:0.092px;-webkit-text-stroke:.12px #4a4f57;transform:scaleX(1.13);transform-origin:left center;">John Smith</span>
<span class="t" id="t29" style="top:316.80px;font-size:8.5px;color:#5a6067;right:547.40px;transform:scaleX(1.1);transform-origin:right center;">2</span>
<span class="t" id="t30" style="top:316.80px;font-size:8.5px;color:#5a6067;right:438.40px;letter-spacing:.2px;transform:scaleX(1.1);transform-origin:right center;">3/10</span>
<span class="t" id="t31" style="top:316.80px;font-size:8.5px;color:#5a6067;right:341.00px;letter-spacing:.2px;transform:scaleX(1.1);transform-origin:right center;">8.5</span>
<span class="t" id="t32" style="top:316.80px;font-size:8.5px;color:#5a6067;left:656.70px;letter-spacing:.35px;transform:scaleX(1.12);transform-origin:left center;">5 mins</span>
<span class="t" id="t33" style="top:344.90px;font-size:8.5px;color:#4a4f57;left:199.50px;letter-spacing:0.000px;-webkit-text-stroke:.12px #4a4f57;transform:scaleX(1.0864);transform-origin:left center;">Jessica Stanton</span>
<span class="t" id="t34" style="top:344.90px;font-size:8.5px;color:#5a6067;right:547.40px;transform:scaleX(1.1);transform-origin:right center;">4</span>
<span class="t" id="t35" style="top:344.90px;font-size:8.5px;color:#5a6067;right:438.40px;letter-spacing:.2px;transform:scaleX(1.1);transform-origin:right center;">8/10</span>
<span class="t" id="t36" style="top:344.90px;font-size:8.5px;color:#5a6067;right:341.00px;letter-spacing:.2px;transform:scaleX(1.1);transform-origin:right center;">7</span>
<span class="t" id="t37" style="top:344.90px;font-size:8.5px;color:#5a6067;left:656.70px;letter-spacing:.35px;transform:scaleX(1.12);transform-origin:left center;">5 mins</span>
<span class="t" id="t38" style="top:373.00px;font-size:8.5px;color:#4a4f57;left:199.50px;letter-spacing:0.000px;-webkit-text-stroke:.12px #4a4f57;transform:scaleX(1.0794);transform-origin:left center;">Oliver Jones</span>
<span class="t" id="t39" style="top:373.00px;font-size:8.5px;color:#5a6067;right:547.40px;transform:scaleX(1.1);transform-origin:right center;">8</span>
<span class="t" id="t40" style="top:373.00px;font-size:8.5px;color:#5a6067;right:438.40px;letter-spacing:.2px;transform:scaleX(1.1);transform-origin:right center;">5/10</span>
<span class="t" id="t41" style="top:373.00px;font-size:8.5px;color:#5a6067;right:341.00px;letter-spacing:.2px;transform:scaleX(1.1);transform-origin:right center;">2.5</span>
<span class="t" id="t42" style="top:373.00px;font-size:8.5px;color:#5a6067;left:656.70px;letter-spacing:.35px;transform:scaleX(1.12);transform-origin:left center;">5 mins</span>
</div>
<div id="panelclip">
  <div id="pshadow"></div>
  <div id="panel"></div>
  <div class="pdiv"></div>
  <div class="avatar"></div>
    <svg class="ic" style="left:731.300px;top:69.800px" width="8" height="8" viewBox="0 0 24 24"><path fill="#7a848e" d="M12 2C8.130 2 5 5.130 5 9c0 5.250 7 13 7 13s7-7.750 7-13c0-3.870-3.130-7-7-7zm0 9.500c-1.380 0-2.500-1.120-2.500-2.500s1.120-2.500 2.500-2.500 2.500 1.120 2.500 2.500-1.120 2.500-2.500 2.500z"/></svg>
  <svg class="ic" style="left:731.300px;top:84.200px" width="8" height="8" viewBox="0 0 24 24"><path fill="#7a848e" d="M6.620 10.790c1.440 2.830 3.760 5.140 6.590 6.590l2.200-2.200c.27-.27.67-.36 1.020-.24 1.120.37 2.330.57 3.570.57.55 0 1 .45 1 1V20c0 .55-.45 1-1 1-9.390 0-17-7.610-17-17 0-.55.45-1 1-1h3.500c.55 0 1 .45 1 1 0 1.250.2 2.450.57 3.570.11.350.03.740-.25 1.020l-2.200 2.200z"/></svg>
  <svg class="ic" style="left:731.300px;top:98.500px" width="8" height="8" viewBox="0 0 24 24"><path fill="#7a848e" d="M20 4H4c-1.100 0-1.990.9-1.990 2L2 18c0 1.100.9 2 2 2h16c1.100 0 2-.9 2-2V6c0-1.100-.9-2-2-2zm0 14H4V8l8 5 8-5v10zm-8-7L4 6h16l-8 5z"/></svg>
  <svg class="ic" style="left:731.300px;top:112.800px" width="8" height="8" viewBox="0 0 24 24"><path fill="#7a848e" d="M12 2C6.480 2 2 6.480 2 12s4.480 10 10 10 10-4.480 10-10S17.520 2 12 2zm-1 17.930c-3.950-.49-7-3.850-7-7.930 0-.62.080-1.210.21-1.790L9 15v1c0 1.100.9 2 2 2v1.930zm6.900-2.540c-.26-.81-1-1.390-1.900-1.390h-1v-3c0-.55-.45-1-1-1H8v-2h2c.55 0 1-.45 1-1V7h2c1.100 0 2-.9 2-2v-.41c2.930 1.190 5 4.060 5 7.410 0 2.080-.8 3.970-2.100 5.390z"/></svg>
  <svg class="ic" style="left:697.39px;top:153.09px" width="14.5" height="14.5" viewBox="0 0 24 24"><path fill="#b7c0c8" d="M19 2H5c-1.110 0-2 .9-2 2v14c0 1.100.89 2 2 2h4l3 3 3-3h4c1.100 0 2-.9 2-2V4c0-1.100-.9-2-2-2zm-6 16h-2v-2h2v2zm2.070-7.750l-.9.920C13.450 11.900 13 12.500 13 14h-2v-.5c0-1.100.45-2.100 1.170-2.830l1.240-1.260c.37-.36.59-.86.59-1.410 0-1.100-.9-2-2-2s-2 .9-2 2H8c0-2.210 1.790-4 4-4s4 1.790 4 4c0 .88-.36 1.680-.93 2.250z"/></svg>
  <svg class="ic" style="left:697.39px;top:196.19px" width="14.5" height="14.5" viewBox="0 0 24 24"><path fill="#b7c0c8" d="M19 2H5c-1.110 0-2 .9-2 2v14c0 1.100.89 2 2 2h4l3 3 3-3h4c1.100 0 2-.9 2-2V4c0-1.100-.9-2-2-2zm-6 16h-2v-2h2v2zm2.070-7.750l-.9.920C13.450 11.900 13 12.500 13 14h-2v-.5c0-1.100.45-2.100 1.170-2.830l1.240-1.260c.37-.36.59-.86.59-1.410 0-1.100-.9-2-2-2s-2 .9-2 2H8c0-2.210 1.790-4 4-4s4 1.790 4 4c0 .88-.36 1.680-.93 2.250z"/></svg>
  <svg class="ic" style="left:697.39px;top:238.49px" width="14.5" height="14.5" viewBox="0 0 24 24"><path fill="#b7c0c8" d="M19 2H5c-1.110 0-2 .9-2 2v14c0 1.100.89 2 2 2h4l3 3 3-3h4c1.100 0 2-.9 2-2V4c0-1.100-.9-2-2-2zm-6 16h-2v-2h2v2zm2.070-7.750l-.9.920C13.450 11.900 13 12.500 13 14h-2v-.5c0-1.100.45-2.100 1.170-2.830l1.240-1.260c.37-.36.59-.86.59-1.410 0-1.100-.9-2-2-2s-2 .9-2 2H8c0-2.210 1.790-4 4-4s4 1.790 4 4c0 .88-.36 1.680-.93 2.250z"/></svg>
  <svg class="ic" style="left:697.39px;top:281.49px" width="14.5" height="14.5" viewBox="0 0 24 24"><path fill="#b7c0c8" d="M19 2H5c-1.110 0-2 .9-2 2v14c0 1.100.89 2 2 2h4l3 3 3-3h4c1.100 0 2-.9 2-2V4c0-1.100-.9-2-2-2zm-6 16h-2v-2h2v2zm2.070-7.750l-.9.920C13.450 11.900 13 12.500 13 14h-2v-.5c0-1.100.45-2.100 1.170-2.830l1.240-1.260c.37-.36.59-.86.59-1.410 0-1.100-.9-2-2-2s-2 .9-2 2H8c0-2.210 1.790-4 4-4s4 1.790 4 4c0 .88-.36 1.680-.93 2.250z"/></svg>
  <svg class="ic" style="left:697.39px;top:322.89px" width="14.5" height="14.5" viewBox="0 0 24 24"><path fill="#b7c0c8" d="M19 2H5c-1.110 0-2 .9-2 2v14c0 1.100.89 2 2 2h4l3 3 3-3h4c1.100 0 2-.9 2-2V4c0-1.100-.9-2-2-2zm-6 16h-2v-2h2v2zm2.070-7.750l-.9.920C13.450 11.900 13 12.500 13 14h-2v-.5c0-1.100.45-2.100 1.170-2.830l1.240-1.260c.37-.36.59-.86.59-1.410 0-1.100-.9-2-2-2s-2 .9-2 2H8c0-2.210 1.790-4 4-4s4 1.790 4 4c0 .88-.36 1.680-.93 2.250z"/></svg>
  <svg class="ic" style="left:697.39px;top:362.59px" width="14.5" height="14.5" viewBox="0 0 24 24"><path fill="#b7c0c8" d="M19 2H5c-1.110 0-2 .9-2 2v14c0 1.100.89 2 2 2h4l3 3 3-3h4c1.100 0 2-.9 2-2V4c0-1.100-.9-2-2-2zm-6 16h-2v-2h2v2zm2.070-7.750l-.9.920C13.450 11.900 13 12.500 13 14h-2v-.5c0-1.100.45-2.100 1.170-2.830l1.240-1.260c.37-.36.59-.86.59-1.410 0-1.100-.9-2-2-2s-2 .9-2 2H8c0-2.210 1.790-4 4-4s4 1.790 4 4c0 .88-.36 1.680-.93 2.250z"/></svg>

<span class="t" id="t43" style="top:45.00px;font-size:9.7px;color:#fff;font-weight:700;left:704.60px;letter-spacing:0.131px;">HS</span>
<span class="t" id="t44" style="top:45.60px;font-size:9.8px;color:#4a4f57;left:732.70px;letter-spacing:0.312px;-webkit-text-stroke:.15px #4a4f57;transform:scaleX(1.15);transform-origin:left center;">John Smith</span>
<span class="t" id="t45" style="top:63.80px;font-size:6.8px;color:#808a95;left:743.80px;letter-spacing:0.051px;transform:scaleX(1.12);transform-origin:left center;">New York, NY</span>
<span class="t" id="t46" style="top:78.20px;font-size:6.8px;color:#808a95;left:743.80px;letter-spacing:0.000px;transform:scaleX(1.0655);transform-origin:left center;">215-964-2333</span>
<span class="t" id="t47" style="top:92.50px;font-size:6.8px;color:#808a95;left:743.80px;letter-spacing:0.399px;transform:scaleX(1.12);transform-origin:left center;">john@bmw.com</span>
<span class="t" id="t48" style="top:106.80px;font-size:6.8px;color:#808a95;left:743.80px;letter-spacing:0.270px;transform:scaleX(1.12);transform-origin:left center;">Chrome</span>
<span class="t" id="t49" style="top:149.60px;font-size:8.0px;color:#828c97;left:716.60px;letter-spacing:0.176px;">Do you smoke?</span>
<span class="t" id="t50" style="top:164.60px;font-size:7.5px;color:#3e444c;left:717.00px;letter-spacing:0.094px;-webkit-text-stroke:.22px #3e444c;transform:scaleX(1.13);transform-origin:left center;">Never touched a cigarette</span>
<span class="t" id="t51" style="top:193.30px;font-size:8.0px;color:#828c97;left:716.60px;letter-spacing:0.139px;">How active is your lifestyles?</span>
<span class="t" id="t52" style="top:207.80px;font-size:7.5px;color:#3e444c;left:717.00px;letter-spacing:0.005px;-webkit-text-stroke:.22px #3e444c;transform:scaleX(1.13);transform-origin:left center;">I play a sport everyday</span>
<span class="t" id="t53" style="top:235.50px;font-size:8.0px;color:#828c97;left:716.60px;letter-spacing:0.214px;">How will you classify your diet?</span>
<span class="t" id="t54" style="top:250.20px;font-size:7.5px;color:#3e444c;left:717.00px;letter-spacing:0.114px;-webkit-text-stroke:.22px #3e444c;transform:scaleX(1.13);transform-origin:left center;">Vegetarian</span>
<span class="t" id="t55" style="top:279.10px;font-size:8.0px;color:#828c97;left:716.60px;letter-spacing:0.132px;">What is your age?</span>
<span class="t" id="t56" style="top:293.50px;font-size:7.5px;color:#3e444c;left:717.00px;letter-spacing:0.000px;transform:scaleX(0.9948);transform-origin:left center;">25</span>
<span class="t" id="t57" style="top:320.00px;font-size:8.0px;color:#828c97;left:716.60px;letter-spacing:0.160px;">Where do you live?</span>
<span class="t" id="t58" style="top:335.20px;font-size:7.5px;color:#3e444c;left:717.00px;letter-spacing:0.000px;-webkit-text-stroke:.22px #3e444c;transform:scaleX(1.1191);transform-origin:left center;">Urban area</span>
<span class="t" id="t59" style="top:358.60px;font-size:8.0px;color:#828c97;left:716.60px;letter-spacing:0.296px;">How many people in your linage (parents,</span>
<span class="t" id="t60" style="top:371.80px;font-size:8.0px;color:#828c97;left:716.60px;letter-spacing:0.175px;">grandparents) have a heart disease?</span>
</div>
</body>
</html>
